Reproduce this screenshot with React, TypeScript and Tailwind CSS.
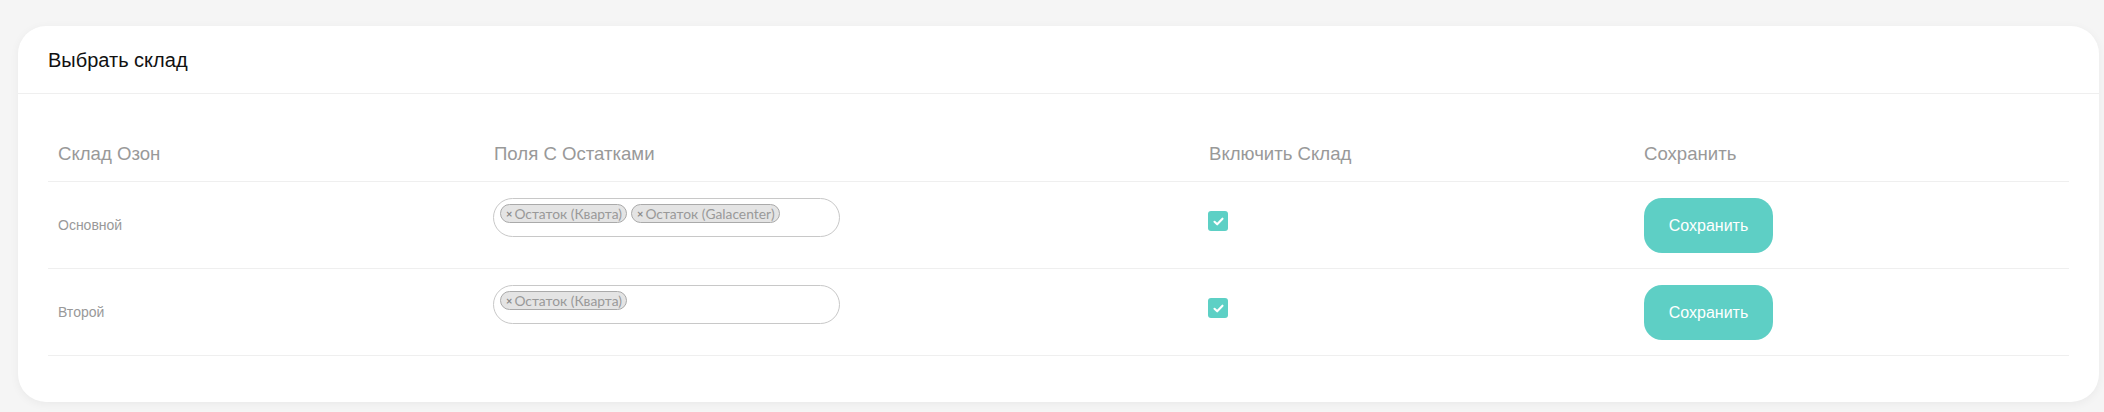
import React from "react";

const rows = [
  { name: "Основной", tags: ["Остаток (Кварта)", "Остаток (Galacenter)"] },
  { name: "Второй", tags: ["Остаток (Кварта)"] },
];

function Check() {
  return (
    <div className="w-[20px] h-[20px] rounded-[3px] bg-[#5dd0c5] flex items-center justify-center">
      <svg width="11" height="9" viewBox="0 0 11 9" fill="none">
        <path d="M1.5 4.8 L4.2 7.3 L9.5 1.7" stroke="#fff" strokeWidth="2.1" strokeLinecap="round" strokeLinejoin="round" />
      </svg>
    </div>
  );
}

function Tag({ label }: { label: string }) {
  return (
    <span className="h-[19px] inline-flex items-center rounded-full border border-[#aaaaaa] bg-[#e4e4e4] pl-[5px] pr-[4px] text-[13.8px] leading-none text-[#999999] font-['Lato',sans-serif]">
      <span className="text-[11px] font-bold mr-[2px] text-[#888]">×</span>
      {label}
    </span>
  );
}

export default function App() {
  return (
    <div className="min-h-[412px] bg-[#f5f5f5] pt-[26px] pl-[18px] pr-[5px] font-['Liberation_Sans',Arial,sans-serif]">
      <div className="bg-white rounded-[28px] shadow-[0_2px_10px_rgba(0,0,0,0.05)] pb-[46px]">
        <div className="h-[68px] flex items-center px-[30px] border-b border-[#efefef]">
          <h2 className="text-[20px] text-[#111]">Выбрать склад</h2>
        </div>
        <div className="mx-[30px] mt-[33px]">
          <div className="grid grid-cols-[434px_716px_436px_1fr] h-[55px] items-center border-b border-[#efefef] text-[18.6px] text-[#999999]">
            <div className="pl-[10px]">Склад Озон</div>
            <div className="pl-[12px]">Поля С Остатками</div>
            <div className="pl-[11px]">Включить Склад</div>
            <div className="pl-[10px]">Сохранить</div>
          </div>
          {rows.map((r) => (
            <div key={r.name} className="grid grid-cols-[434px_716px_436px_1fr] h-[87px] border-b border-[#efefef]">
              <div className="pl-[10px] flex items-center text-[14px] text-[#999999]">{r.name}</div>
              <div className="pl-[11px] pt-[16px]">
                <div className="w-[347px] h-[39px] rounded-full border border-[#c8c8c8] flex items-start gap-[4px] pl-[6px] pt-[5px]">
                  {r.tags.map((t) => (
                    <Tag key={t} label={t} />
                  ))}
                </div>
              </div>
              <div className="pl-[10px] pt-[29px]">
                <Check />
              </div>
              <div className="pl-[10px] pt-[16px]">
                <button className="w-[129px] h-[55px] rounded-[18px] bg-[#5ecfc5] text-white text-[16px]">
                  Сохранить
                </button>
              </div>
            </div>
          ))}
        </div>
      </div>
    </div>
  );
}
